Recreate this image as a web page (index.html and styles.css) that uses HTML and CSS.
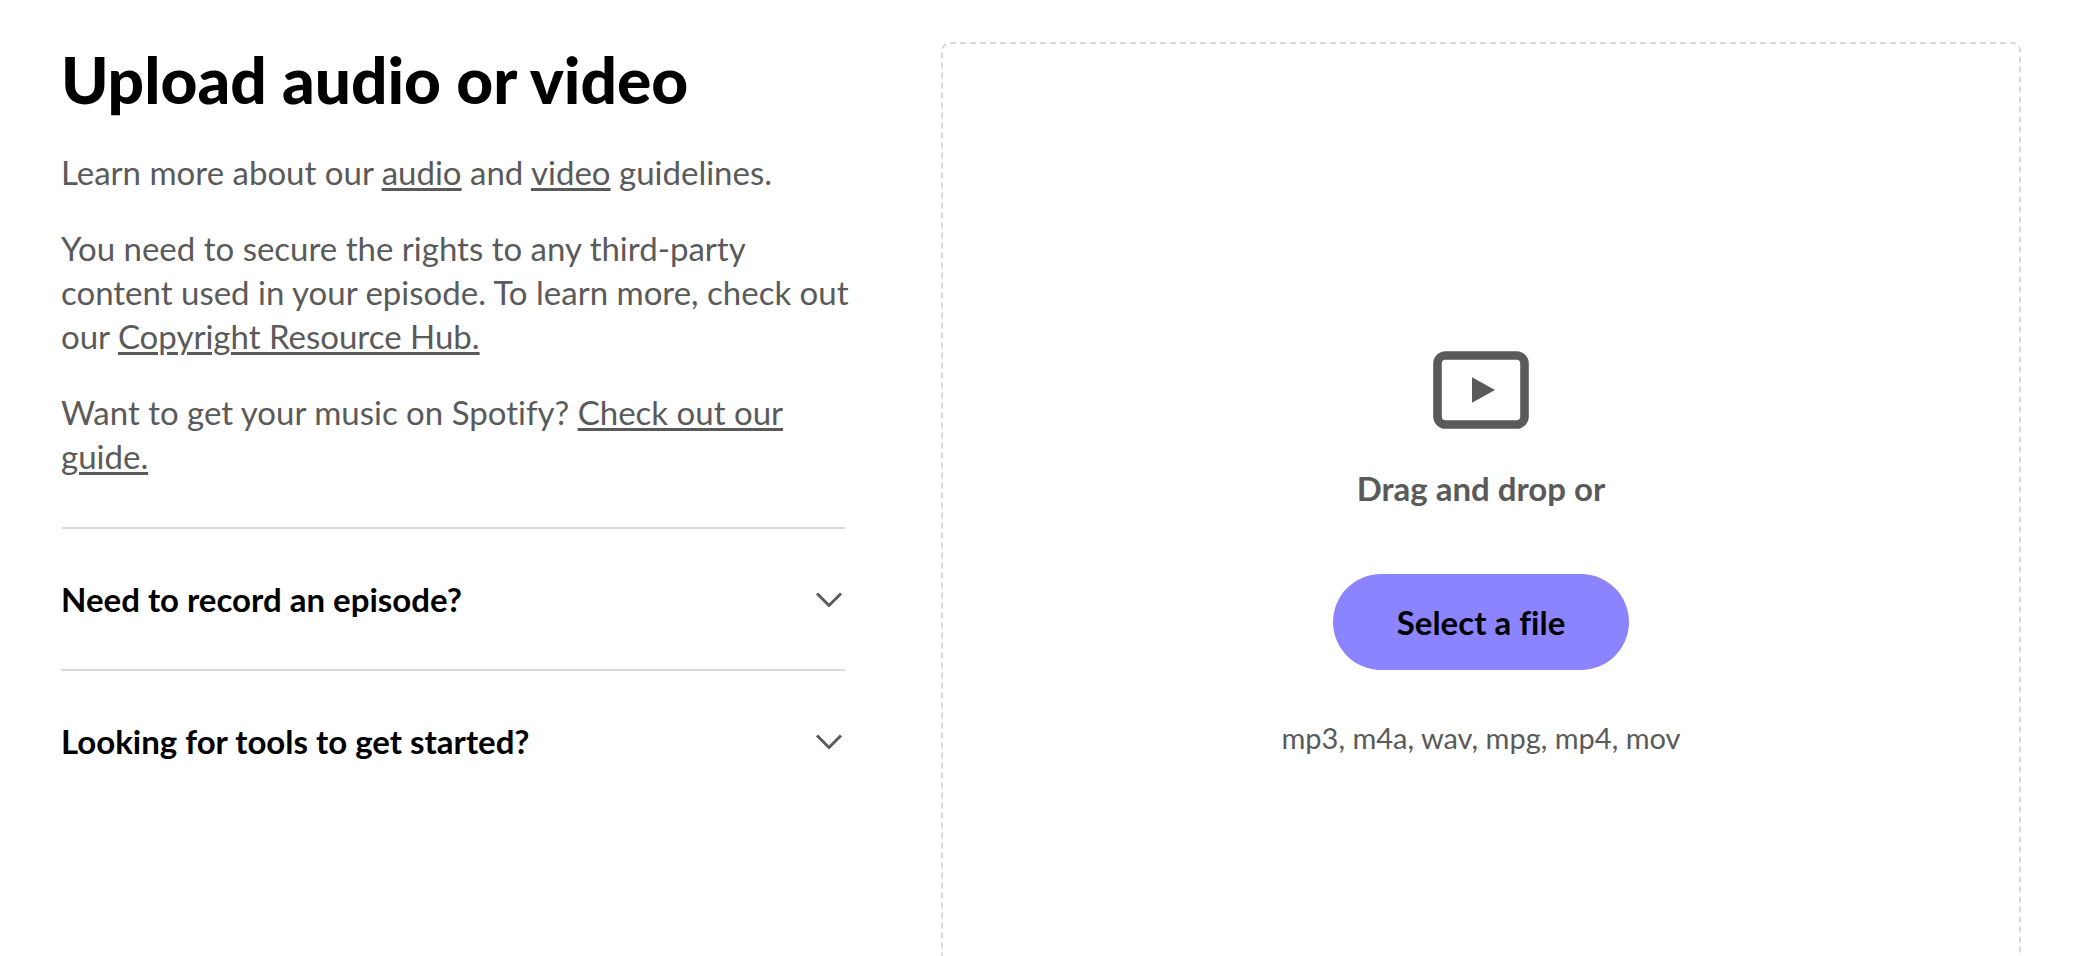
FILE: index.html
```html
<!DOCTYPE html>
<html lang="en">
<head>
<meta charset="utf-8">
<meta name="viewport" content="width=device-width, initial-scale=1">
<title>Upload audio or video</title>
<link rel="stylesheet" href="styles.css">
</head>
<body>
<main class="upload">
  <section class="info">
    <h1 class="title">Upload audio or video</h1>
    <div class="copy">
      <p class="text">Learn more about our <a href="#audio">audio</a> and <a href="#video">video</a> guidelines.</p>
      <p class="text">You need to secure the rights to any third-party content used in your episode. To learn more, check out our <a href="#copyright">Copyright Resource Hub.</a></p>
      <p class="text">Want to get your music on Spotify? <a href="#guide">Check out our guide.</a></p>
    </div>
    <div class="accordion">
      <button class="accordion-item" type="button" aria-expanded="false">
        <span>Need to record an episode?</span>
        <svg class="chevron" viewBox="0 0 32 32" aria-hidden="true"><path d="M4 10.500l12 12 12-12"/></svg>
      </button>
      <button class="accordion-item" type="button" aria-expanded="false">
        <span>Looking for tools to get started?</span>
        <svg class="chevron" viewBox="0 0 32 32" aria-hidden="true"><path d="M4 10.500l12 12 12-12"/></svg>
      </button>
    </div>
  </section>
  <section class="dropzone">
    <svg class="outline" aria-hidden="true"><rect class="outline-rect" x="1" y="1" rx="8"/></svg>
    <svg class="video-icon" viewBox="0 0 96 96" aria-hidden="true">
      <rect x="4.500" y="13.500" width="87" height="69" rx="8" fill="none" stroke="currentColor" stroke-width="8.600"/>
      <path d="M39 35.200v25.600L62 48z" fill="currentColor"/>
    </svg>
    <p class="hint">Drag and drop or</p>
    <button class="select-button" type="button">Select a file</button>
    <p class="formats">mp3, m4a, wav, mpg, mp4, mov</p>
  </section>
</main>
</body>
</html>
```
FILE: styles.css
```css
* {
  box-sizing: border-box;
}

body {
  margin: 0;
  background: #fff;
  color: #000;
  font-family: Lato, "Open Sans", sans-serif;
  font-size: 33px;
  font-variant-ligatures: none;
  line-height: 44px;
}

.upload {
  display: grid;
  grid-template-columns: 40% 1fr;
  column-gap: 96px;
  height: 100vh;
  padding: 42px 75px 0 61px;
  overflow: hidden;
}

.title {
  margin: 0 0 32px;
  font-size: 64px;
  font-weight: 900;
  line-height: 76px;
}

.copy {
  margin-right: -12px;
}

.text {
  margin: 0 0 32px;
  color: #5a5a5a;
}

.text a {
  color: inherit;
  text-decoration-thickness: 3px;
  text-underline-offset: 3px;
}

.accordion {
  margin-top: 49px;
}

.accordion-item {
  display: flex;
  align-items: center;
  justify-content: space-between;
  width: 100%;
  padding: 48px 0;
  border: 0;
  border-top: 2px solid #d9d9d9;
  background: none;
  color: inherit;
  font: inherit;
  font-weight: 700;
  text-align: left;
  cursor: pointer;
}

.chevron {
  width: 32px;
  height: 32px;
  fill: none;
  stroke: #5a5a5a;
  stroke-width: 3;
}

.dropzone {
  position: relative;
  display: flex;
  flex-direction: column;
  align-items: center;
  justify-content: center;
  height: calc(100vh + 60px);
  color: #5a5a5a;
}

.outline {
  position: absolute;
  inset: 0;
  width: 100%;
  height: 100%;
}

.outline-rect {
  width: calc(100% - 2px);
  height: calc(100% - 2px);
  fill: none;
  stroke: #d9d9d9;
  stroke-width: 2;
  stroke-dasharray: 6 4;
}

.video-icon {
  width: 96px;
  height: 96px;
}

.hint {
  margin: 28px 0 64px;
  font-weight: 700;
}

.select-button {
  position: relative;
  padding: 26px 64px;
  border: 0;
  border-radius: 48px;
  background: #8c84ff;
  color: #000;
  font: inherit;
  font-weight: 700;
  cursor: pointer;
}

.formats {
  margin: 48px 0 0;
  font-size: 29px;
  line-height: 40px;
}
```
